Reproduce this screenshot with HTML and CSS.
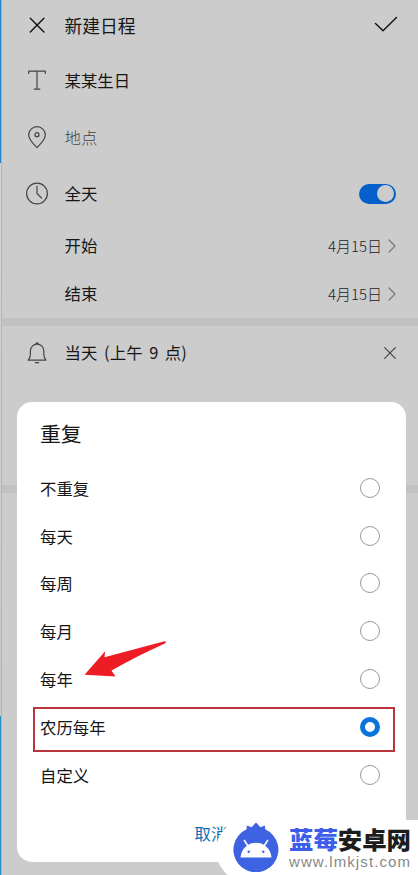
FILE: index.html
```
<!DOCTYPE html>
<html lang="zh-CN">
<head>
    <meta charset="UTF-8">
    <meta name="viewport" content="width=device-width, initial-scale=1.0">
    <title>新建日程</title>
    <link rel="stylesheet" href="styles.css">
</head>
<body>

    <div class="edge"></div>

    <div class="page">
        <div class="row header">
            <svg class="icon" viewBox="0 0 24 24"><path d="M5.3 4.300l13.600 13.600M18.900 4.300L5.300 17.900"/></svg>
            <span class="label">新建日程</span>
            <svg class="check" viewBox="0 0 24 18"><path d="M1.5 8.5l7.500 7.300L22.500 2.500"/></svg>
        </div>
        <div class="row title">
            <svg class="icon" viewBox="0 0 24 24"><path d="M3.7 4.400V2.200h16.600v2.200M12 2.200v18M9.200 20.200h5.600"/></svg>
            <span class="label">某某生日</span>
        </div>
        <div class="row place">
            <svg class="icon" viewBox="0 0 24 24"><path d="M12 22.6C9.4 19.9 3.7 15 3.7 10a8.3 8.3 0 0 1 16.6 0c0 5-5.700 9.900-8.300 12.600z"/><circle cx="12" cy="9.700" r="2"/></svg>
            <span class="label muted">地点</span>
        </div>
        <div class="row allday">
            <svg class="icon" viewBox="0 0 24 24"><circle cx="12" cy="11.500" r="10.400"/><path d="M12 4v7.500l4.700 4.700"/></svg>
            <span class="label">全天</span>
            <span class="switch"></span>
        </div>
        <div class="row date">
            <span class="label">开始</span>
            <span class="value">4月15日</span>
            <svg class="chevron" viewBox="0 0 8 14"><path d="M1 1l6 6-6 6"/></svg>
        </div>
        <div class="row date">
            <span class="label">结束</span>
            <span class="value">4月15日</span>
            <svg class="chevron" viewBox="0 0 8 14"><path d="M1 1l6 6-6 6"/></svg>
        </div>
        <div class="divider"></div>
        <div class="row reminder">
            <svg class="icon" viewBox="0 0 24 24"><path d="M3.200 19.200c1.700-1.700 2.200-2.800 2.200-5.600v-3.800a6.700 6.700 0 0 1 13.400 0v3.800c0 2.800.5 3.900 2.200 5.600zM10.800 3.100c0-1.700 2.600-1.700 2.600 0M10.400 21.600h3.200"/></svg>
            <span class="label">当天 (上午 9 点)</span>
            <svg class="remove" viewBox="0 0 12 12"><path d="M.7.7l10.600 10.600M11.300.7L.7 11.300"/></svg>
        </div>
        <div class="more">
            <svg class="tips" viewBox="0 0 82 2"><path d="M2 1.500h2M20 1.500h2M36 1.500h2M72 1.500h1M77 1.500h2"/></svg>
        </div>
        <div class="divider"></div>
    </div>

    <div class="dialog">
        <h2>重复</h2>
        <ul class="options">
            <li><span>不重复</span><i class="radio"></i></li>
            <li><span>每天</span><i class="radio"></i></li>
            <li><span>每周</span><i class="radio"></i></li>
            <li><span>每月</span><i class="radio"></i></li>
            <li><span>每年</span><i class="radio"></i></li>
            <li class="selected"><span>农历每年</span><i class="radio checked"></i></li>
            <li><span>自定义</span><i class="radio"></i></li>
        </ul>
        <div class="cancel">取消</div>
    </div>

    <svg class="arrow" viewBox="0 0 84 40"><path d="M80.500 1.200L20.500 17.200 21.200 11.300 0.500 34.700 31.500 36.600 27.500 30.500C45 20.500 63 12 80.800 3.600 82.200 2.600 82 .9 80.500 1.200z"/></svg>

    <div class="watermark">
        <svg class="logo" viewBox="0 0 46 50">
            <path class="berry" d="M13.600 7.300L13.800 3.600 18.600 5.300 23 .6 27.400 5.300 31.900 3.600 32.200 7.300A22.500 22.500 0 1 1 13.600 7.300z"/>
            <path class="antenna" d="M11.400 18.500l4.200 6.500M34.600 18.500L30.400 25"/>
            <path class="head" d="M7.500 35.500C8.300 27 14.500 20.800 23 20.800S37.700 27 38.500 35.500z"/>
            <circle class="berry" cx="15.700" cy="29.700" r="1.200"/>
            <circle class="berry" cx="30.300" cy="29.700" r="1.200"/>
        </svg>
        <div class="brand">
            <div class="name"><span>蓝莓</span>安卓网</div>
            <div class="url">www.lmkjst.com</div>
        </div>
    </div>

</body>
</html>
```
FILE: styles.css
```
* {
    box-sizing: border-box;
}

body {
    margin: 0;
    display: flex;
    position: relative;
    width: 418px;
    height: 875px;
    overflow: hidden;
    background: #ccc;
    font-family: "Noto Sans CJK SC", sans-serif;
    font-weight: 400;
    font-size: 16.4px;
    color: #161616;
}

svg {
    display: block;
    flex: none;
    fill: none;
    stroke: #444;
    stroke-width: 1.2;
    stroke-linecap: round;
    stroke-linejoin: round;
}

.edge {
    width: 2px;
    border-right: 1px solid #b0b4b8;
    background: linear-gradient(#2583cc 163px, #d6d6d6 163px, #c8c8c8 716px, #2b91c4 716px);
}

.page {
    flex: 1;
}

.row {
    display: flex;
    align-items: center;
    padding: 0 22px 0 23px;
}

.icon {
    width: 24px;
    height: 24px;
    margin-right: 15.5px;
}

.label {
    flex: 1;
    line-height: 24px;
    padding-bottom: 2px;
}

.muted {
    padding-bottom: 0;
    font-weight: 300;
    color: #444;
}

.header {
    height: 52px;
    font-size: 17.8px;
}

.header svg {
    stroke: #111;
    stroke-width: 1.4;
}

.header .check {
    width: 24px;
    height: 18px;
    margin-right: -2px;
    margin-bottom: 4px;
}

.title {
    height: 57px;
}

.place {
    height: 56px;
}

.allday {
    height: 57px;
}

.switch {
    width: 37px;
    height: 20px;
    padding: 1.5px 2px;
    border-radius: 10px;
    background: #0660cb;
}

.switch::after {
    content: "";
    display: block;
    width: 17px;
    height: 17px;
    margin-left: auto;
    border-radius: 50%;
    background: #ccc;
}

.date {
    height: 48px;
    padding-left: 62.500px;
    padding-bottom: 1px;
}

.value {
    margin-right: 6px;
    padding-bottom: 1px;
    font-size: 15px;
    font-weight: 300;
    color: #222;
}

.chevron {
    width: 8px;
    height: 14px;
    stroke: #777;
}

.divider {
    height: 8px;
    background: #c2c2c2;
}

.reminder {
    height: 54px;
}

.reminder .label {
    letter-spacing: .2px;
    word-spacing: 2.400px;
}

.remove {
    width: 12px;
    height: 12px;
}

.more {
    height: 105px;
    padding: 21px 0 0 118px;
}

.tips {
    width: 82px;
    height: 2px;
    stroke: #777;
    stroke-width: 1;
    stroke-linecap: butt;
}

.dialog {
    position: absolute;
    left: 17px;
    top: 402px;
    width: 389px;
    height: 460px;
    padding: 15px 11px 0 16px;
    border-radius: 15px;
    background: #fff;
}

.dialog h2 {
    margin: 0 0 15px 7px;
    font-size: 20.800px;
    line-height: 32px;
    font-weight: 400;
}

.options {
    margin: 0;
    padding: 0;
    list-style: none;
}

.options li {
    display: flex;
    justify-content: space-between;
    align-items: center;
    height: 47.800px;
    padding: 0 15px 0 7px;
}

.options .selected {
    height: 45px;
    margin: 4px 0 -1px;
    padding: 0 13px 4px 5px;
    border: 2px solid #b9343b;
}

.radio {
    width: 20px;
    height: 20px;
    border: 1px solid #999;
    border-radius: 50%;
}

.checked {
    border: 5px solid #0a74dc;
}

.cancel {
    margin: 22px 0 0 161.500px;
    line-height: 24px;
    color: #0a6fb8;
}

.arrow {
    position: absolute;
    left: 84px;
    top: 640px;
    width: 84px;
    height: 40px;
    fill: #ee1c25;
    stroke: none;
}

.watermark {
    position: absolute;
    left: 216px;
    top: 820px;
    width: 202px;
    height: 62px;
    display: flex;
    padding: 2px 0 0 17px;
    border-radius: 34px 0 0 36px;
    background: #fff;
}

.logo {
    width: 46px;
    height: 50px;
    stroke: none;
}

.berry {
    fill: #3d62e2;
}

.head {
    fill: #fff;
}

.antenna {
    stroke: #fff;
    stroke-width: 1.6;
}

.brand {
    margin: 4px 0 0 10px;
    white-space: nowrap;
}

.name {
    font-size: 24.400px;
    line-height: 26px;
    font-weight: 900;
    color: #1c1c1c;
}

.name span {
    color: #3d5ee8;
}

.url {
    margin-top: 1px;
    font-family: "Liberation Sans", sans-serif;
    font-size: 15px;
    line-height: 17px;
    font-weight: 400;
    letter-spacing: 1.100px;
    color: #888;
}
```
